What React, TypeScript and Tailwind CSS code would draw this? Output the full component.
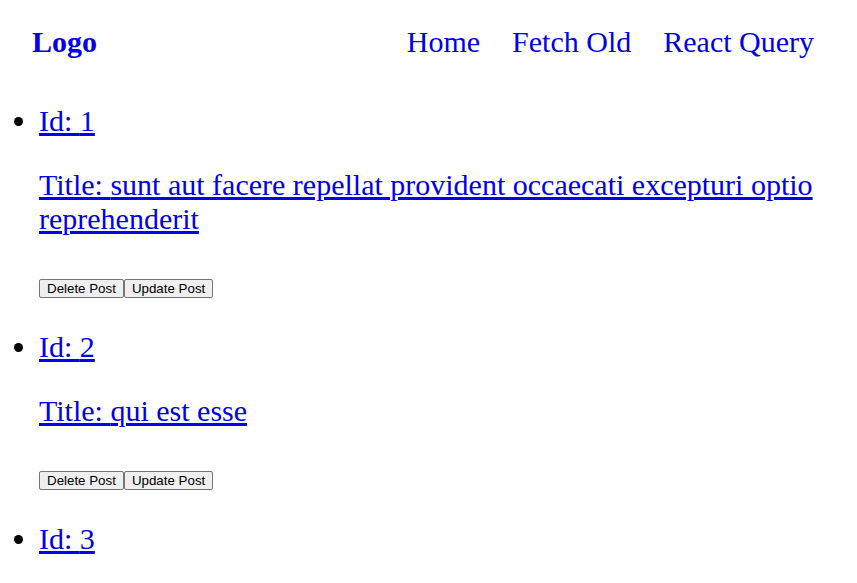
import React from "react"

const posts = [
  { id: 1, title: "sunt aut facere repellat provident occaecati excepturi optio reprehenderit" },
  { id: 2, title: "qui est esse" },
  { id: 3, title: "ea molestias quasi exercitationem repellat qui ipsa sit aut" },
]

const btn =
  "inline-block border border-[#767676] bg-[#efefef] rounded-[2px] px-[7px] py-[1px] text-[13.333px] leading-[normal] text-black align-baseline [font-family:'Liberation_Sans',Arial,sans-serif]"

export default function App() {
  return (
    <div className="min-h-screen bg-white text-black [font-family:'Liberation_Serif','Times_New_Roman',serif]">
      <nav className="flex items-center justify-between pl-8 pr-[43px] pt-[25px] pb-[15px] text-[30px] leading-[normal]">
        <a href="#" className="font-bold text-[#0000ee]">Logo</a>
        <div className="flex gap-8">
          <a href="#" className="text-[#0000ee]">Home</a>
          <a href="#" className="text-[#0000ee]">Fetch Old</a>
          <a href="#" className="text-[#0000ee]">React Query</a>
        </div>
      </nav>
      <ul className="list-disc pl-[39px] m-0">
        {posts.map((p) => (
          <li key={p.id} className="text-[30px] leading-[normal]">
            <a href="#" className="text-[#0000ee] underline">
              <p className="my-[30px]">Id: {p.id}</p>
            </a>
            <a href="#" className="text-[#0000ee] underline">
              <p className="my-[30px]">Title: {p.title}</p>
            </a>
            <button className={btn}>Delete Post</button><button className={btn}>Update Post</button>
          </li>
        ))}
      </ul>
    </div>
  )
}
